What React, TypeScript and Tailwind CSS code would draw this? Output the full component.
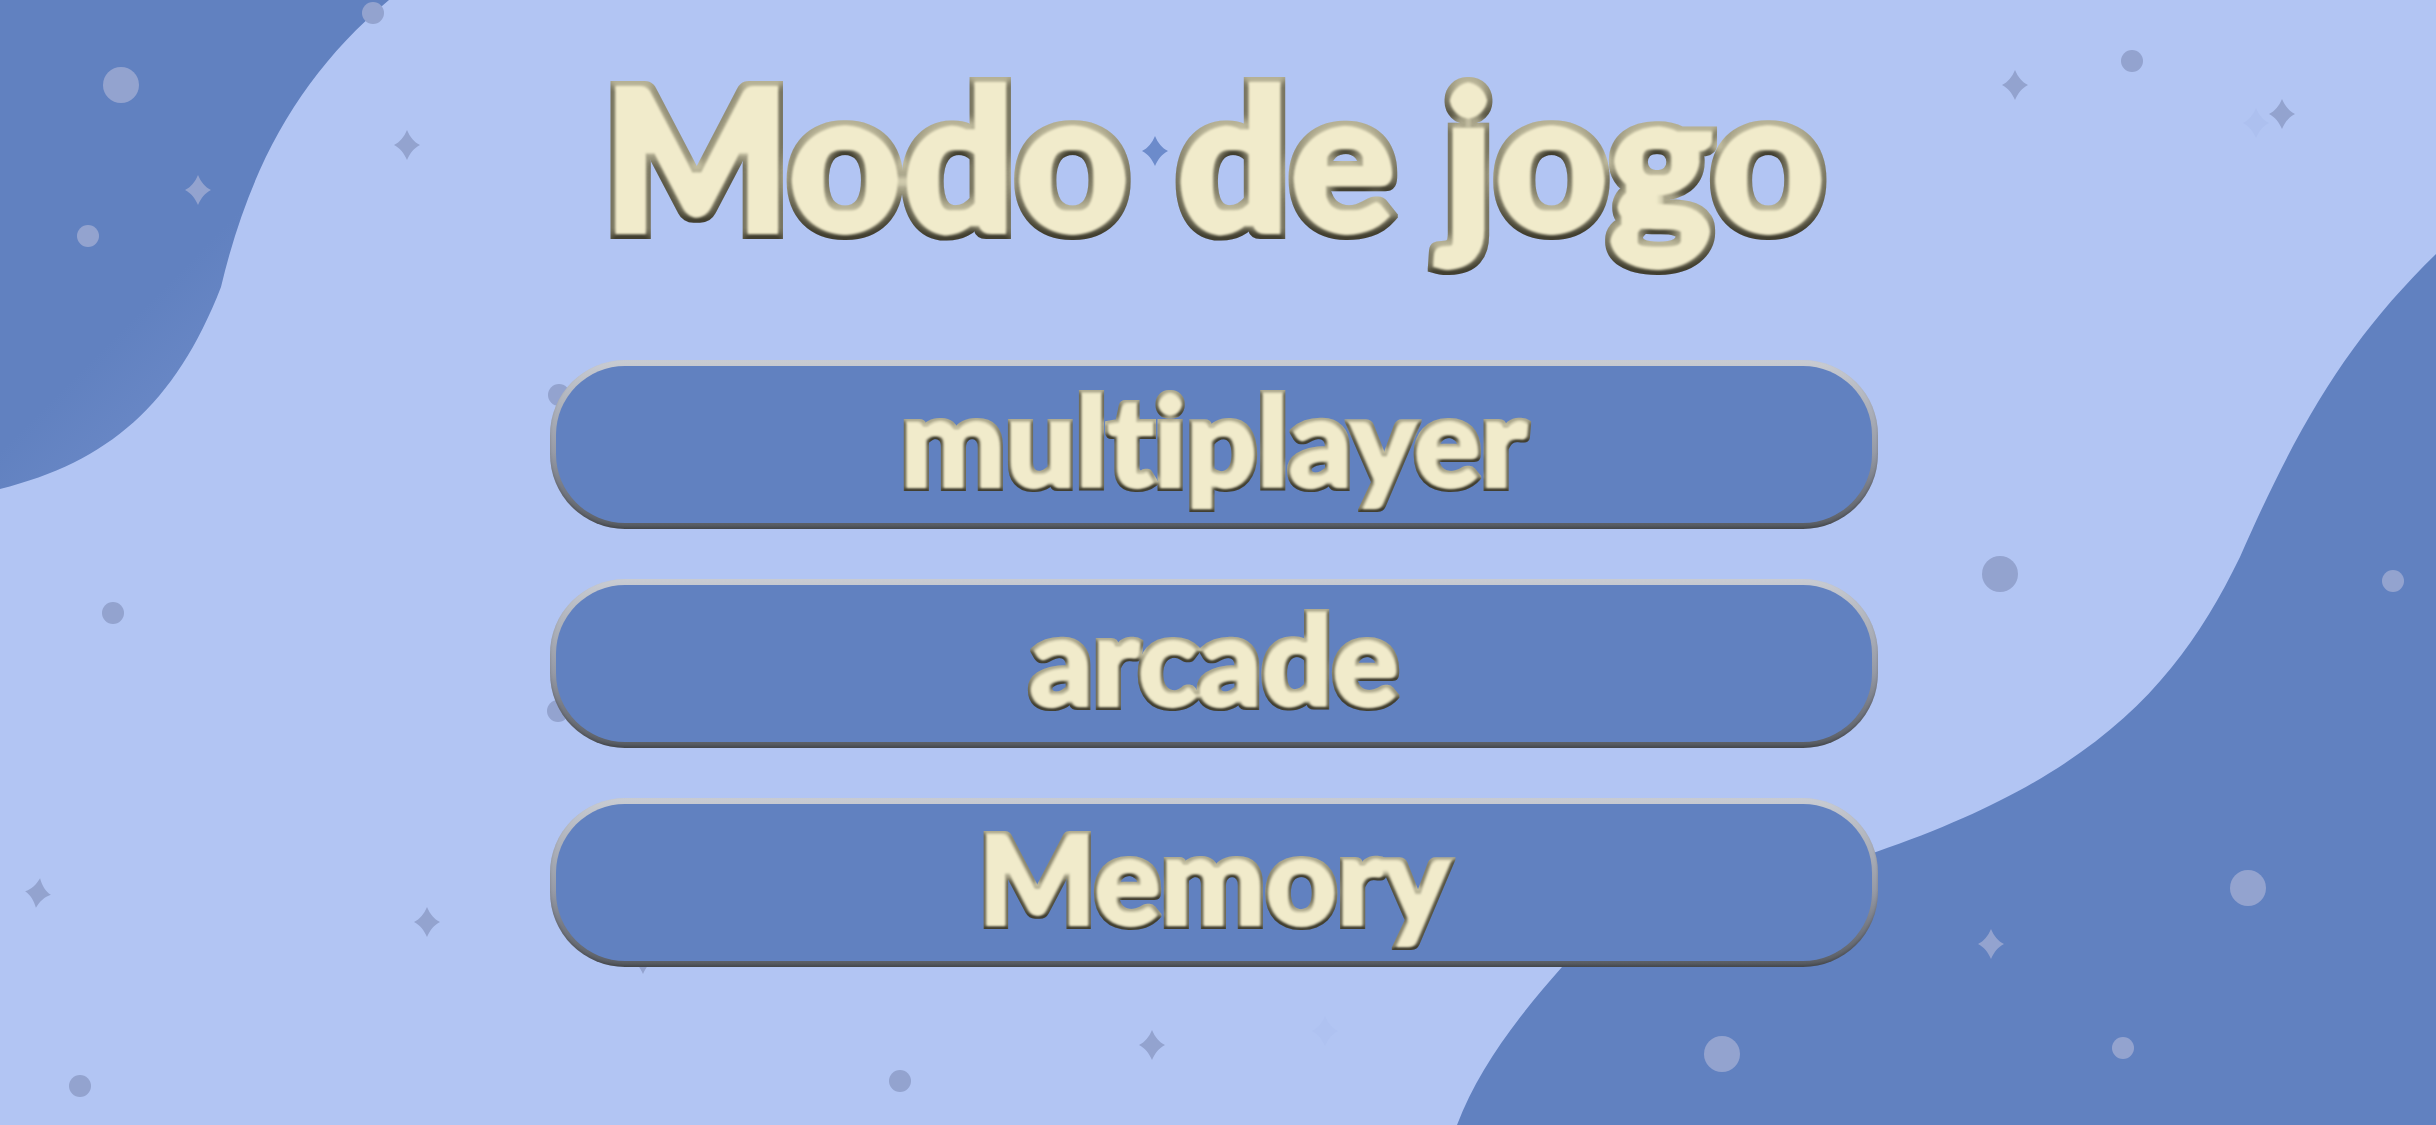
import React from 'react';

const circles = [
  { x: 121, y: 85, r: 18 },
  { x: 88, y: 236, r: 11 },
  { x: 373, y: 13, r: 11 },
  { x: 559, y: 395, r: 11 },
  { x: 113, y: 613, r: 11 },
  { x: 558, y: 711, r: 11 },
  { x: 80, y: 1086, r: 11 },
  { x: 900, y: 1081, r: 11 },
  { x: 2132, y: 61, r: 11 },
  { x: 2000, y: 574, r: 18 },
  { x: 2393, y: 581, r: 11 },
  { x: 2248, y: 888, r: 18 },
  { x: 1722, y: 1054, r: 18 },
  { x: 2123, y: 1048, r: 11 },
];

const stars = [
  { x: 198, y: 190, color: '#93a3cf' },
  { x: 407, y: 145, color: '#93a3cf' },
  { x: 2015, y: 85, color: '#93a3cf' },
  { x: 2256, y: 123, color: '#adc0ef' },
  { x: 2282, y: 114, color: '#93a3cf' },
  { x: 1155, y: 151, color: '#6c8bcb' },
  { x: 38, y: 893, color: '#93a3cf', rotate: 8 },
  { x: 427, y: 922, color: '#93a3cf' },
  { x: 643, y: 959, color: '#93a3cf' },
  { x: 1152, y: 1045, color: '#93a3cf' },
  { x: 1325, y: 1031, color: '#afc2f1' },
  { x: 1991, y: 944, color: '#93a3cf' },
];

const modes = [
  { id: 'multiplayer', label: 'multiplayer' },
  { id: 'arcade', label: 'arcade' },
  { id: 'memory', label: 'Memory' },
];

// raised rim around the letters, lit from above
function BevelFilter({ id, rim, depth }: { id: string; rim: number; depth: number }) {
  return (
    <filter id={id} x="-5%" y="-10%" width="110%" height="120%" colorInterpolationFilters="sRGB">
      <feMorphology in="SourceAlpha" operator="dilate" radius="1" result="outer" />
      <feMorphology in="SourceAlpha" operator="erode" radius={rim} result="core" />
      <feGaussianBlur in="core" stdDeviation="1" result="inner" />
      <feGaussianBlur in="outer" stdDeviation={rim} result="bump" />
      <feDiffuseLighting in="bump" surfaceScale={depth} diffuseConstant="1.05" lightingColor="#cfcbb4" result="lit">
        <feDistantLight azimuth="270" elevation="55" />
      </feDiffuseLighting>
      <feComponentTransfer in="lit" result="light">
        <feFuncR type="linear" slope="0.58" intercept="0.26" />
        <feFuncG type="linear" slope="0.58" intercept="0.25" />
        <feFuncB type="linear" slope="0.58" intercept="0.19" />
      </feComponentTransfer>
      <feComposite in="light" in2="outer" operator="in" result="edge" />
      <feFlood floodColor="#f1ebcb" />
      <feComposite in2="inner" operator="in" result="fill" />
      <feMerge>
        <feMergeNode in="edge" />
        <feMergeNode in="fill" />
      </feMerge>
    </filter>
  );
}

function Background() {
  return (
    <svg
      className="absolute inset-0 h-full w-full"
      viewBox="0 0 2436 1125"
      preserveAspectRatio="xMidYMid slice"
      aria-hidden="true"
    >
      <defs>
        <linearGradient id="blobLeft" gradientUnits="userSpaceOnUse" x1="100" y1="350" x2="180" y2="430">
          <stop offset="0" stopColor="#6181c0" />
          <stop offset="1" stopColor="#6b89c7" />
        </linearGradient>
        <BevelFilter id="bevelLarge" rim={4} depth={9} />
        <BevelFilter id="bevelSmall" rim={2} depth={6} />
      </defs>
      <path d="M0 0H389C300 75 250 165 221 287C175 405 108 462 0 489Z" fill="url(#blobLeft)" />
      <path
        d="M2436 254C2350 338 2300 420 2240 557C2180 680 2100 775 1876 852C1720 900 1620 880 1562 967C1515 1020 1478 1070 1457 1125H2436Z"
        fill="#6181c0"
      />
      {circles.map(c => (
        <circle key={`${c.x}-${c.y}`} cx={c.x} cy={c.y} r={c.r} fill="#93a3cf" />
      ))}
      {stars.map(s => (
        <path
          key={`${s.x}-${s.y}`}
          d="M0-15C3-8 7-3 13 0C7 3 3 8 0 15C-3 8-7 3-13 0C-7-3-3-8 0-15Z"
          transform={`translate(${s.x} ${s.y}) rotate(${s.rotate ?? 0})`}
          fill={s.color}
        />
      ))}
    </svg>
  );
}

function ModeButton({ label }: { label: string }) {
  return (
    <button
      type="button"
      className="flex h-[169px] w-full cursor-pointer rounded-[75px] bg-[linear-gradient(to_bottom,#c9ccd3_0%,#b0b4bd_25%,#969aa6_55%,#777b85_75%,#5f636a_95%,#54585e_100%)] p-[6px] shadow-[inset_0_-2px_3px_rgba(0,0,0,0.2)]"
    >
      <span className="flex flex-1 items-center justify-center self-stretch rounded-[69px] bg-[#6181c0] pb-3">
        <span className="text-[124px] leading-[140px] text-[#f1ebcb] [-webkit-text-stroke:6px_#f1ebcb] [filter:url(#bevelSmall)]">
          {label}
        </span>
      </span>
    </button>
  );
}

export default function App() {
  return (
    <div className="relative min-h-screen w-full overflow-hidden bg-[#b2c5f3] font-['Lato','Open_Sans',sans-serif] font-black [font-variant-ligatures:none]">
      <Background />
      <main className="relative flex flex-col items-center pt-10 pr-2">
        <h1 className="text-[198px] leading-[232px] whitespace-nowrap text-[#f1ebcb] [-webkit-text-stroke:12px_#f1ebcb] [filter:url(#bevelLarge)]">
          Modo de jogo
        </h1>
        <nav className="mt-[88px] flex w-[54.7%] flex-col gap-[50px]" aria-label="Modo de jogo">
          {modes.map(mode => (
            <ModeButton key={mode.id} label={mode.label} />
          ))}
        </nav>
      </main>
    </div>
  );
}
